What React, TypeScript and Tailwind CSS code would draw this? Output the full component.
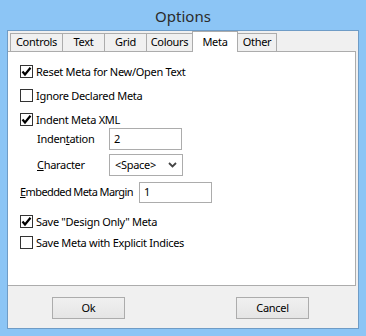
import React from "react";

const font = { fontFamily: '"Noto Sans", "Open Sans", sans-serif' };

const tabs = [
  { name: "Controls", w: "w-[53px]" },
  { name: "Text", w: "w-[43px]" },
  { name: "Grid", w: "w-[43px]" },
  { name: "Colours", w: "w-[47px]" },
  { name: "Meta", w: "w-[46px]", active: true },
  { name: "Other", w: "w-[40px]" },
];

function CheckBox({ checked }: { checked?: boolean }) {
  return (
    <div className="w-[13px] h-[13px] shrink-0 border border-[#333333] bg-white flex items-center justify-center">
      {checked && (
        <svg width="11" height="11" viewBox="0 0 11 11">
          <polyline
            points="1.5,5.5 4,8.5 9.5,1.8"
            fill="none"
            stroke="#000"
            strokeWidth="2.2"
          />
        </svg>
      )}
    </div>
  );
}

function CheckRow({
  checked,
  label,
  className = "",
}: {
  checked?: boolean;
  label: string;
  className?: string;
}) {
  return (
    <div className={`flex items-center h-[13px] pl-[12px] gap-[3px] ${className}`}>
      <CheckBox checked={checked} />
      <span className="whitespace-nowrap leading-none">{label}</span>
    </div>
  );
}

export default function App() {
  return (
    <div
      className="w-[366px] h-[336px] bg-[#8cc5f5] flex flex-col text-[11px] tracking-[-0.3px] text-black"
      style={font}
    >
      {/* title bar */}
      <div className="h-[30px] shrink-0 flex items-center justify-center text-[15px] tracking-normal text-[#2b2b2b] pt-[2px]">
        Options
      </div>

      {/* client area */}
      <div className="ml-[7px] w-[352px] h-[299px] border border-[#6f9cc6] bg-[#f0f0f0] flex flex-col">
        {/* tab strip */}
        <div className="h-[20px] shrink-0 flex items-end pl-[2px]">
          {tabs.map((t, i) =>
            t.active ? (
              <div
                key={t.name}
                className={`${t.w} h-[21px] -mb-px relative z-10 -ml-px border border-b-0 border-[#acacac] bg-white flex items-start justify-center pt-[2px]`}
              >
                {t.name}
              </div>
            ) : (
              <div
                key={t.name}
                className={`${t.w} h-[18px] ${i > 0 ? "-ml-px" : ""} border border-b-0 border-[#acacac] bg-[#f0f0f0] flex items-center justify-center`}
              >
                {t.name}
              </div>
            ),
          )}
        </div>

        {/* page */}
        <div className="w-[348px] h-[235px] shrink-0 border border-l-0 border-[#acacac] bg-white pt-[13px] flex flex-col">
          <CheckRow checked label="Reset Meta for New/Open Text" />
          <CheckRow label="Ignore Declared Meta" className="mt-[11px]" />
          <CheckRow checked label="Indent Meta XML" className="mt-[11px]" />

          <div className="mt-[2px] flex items-center h-[22px]">
            <span className="ml-[29px] w-[72px]">
              Inden<span className="underline">t</span>ation
            </span>
            <div className="w-[73px] h-[22px] border border-[#acacac] bg-white flex items-center pl-[4px]">
              2
            </div>
          </div>

          <div className="mt-[4px] flex items-center h-[22px]">
            <span className="ml-[29px] w-[72px]">
              <span className="underline">C</span>haracter
            </span>
            <div className="w-[74px] h-[22px] border border-[#acacac] bg-white flex items-center justify-between pl-[5px] pr-[5px]">
              <span>&lt;Space&gt;</span>
              <svg width="9" height="6" viewBox="0 0 9 6">
                <polyline
                  points="1,1 4.5,4.5 8,1"
                  fill="none"
                  stroke="#444"
                  strokeWidth="1.8"
                />
              </svg>
            </div>
          </div>

          <div className="mt-[6px] flex items-center h-[21px]">
            <span className="ml-[12px] w-[119px] whitespace-nowrap tracking-[-0.6px]">
              <span className="underline">E</span>mbedded Meta Margin
            </span>
            <div className="w-[73px] h-[21px] border border-[#acacac] bg-white flex items-center pl-[4px]">
              1
            </div>
          </div>

          <CheckRow checked label={'Save "Design Only" Meta'} className="mt-[12px]" />
          <CheckRow label="Save Meta with Explicit Indices" className="mt-[8px]" />
        </div>

        {/* buttons */}
        <div className="flex pl-[44px] pt-[11px] gap-[111px]">
          <button className="w-[73px] h-[22px] border border-[#acacac] bg-gradient-to-b from-[#f0f0f0] to-[#e5e5e5]">
            Ok
          </button>
          <button className="w-[73px] h-[22px] border border-[#acacac] bg-gradient-to-b from-[#f0f0f0] to-[#e5e5e5]">
            Cancel
          </button>
        </div>
      </div>
    </div>
  );
}
